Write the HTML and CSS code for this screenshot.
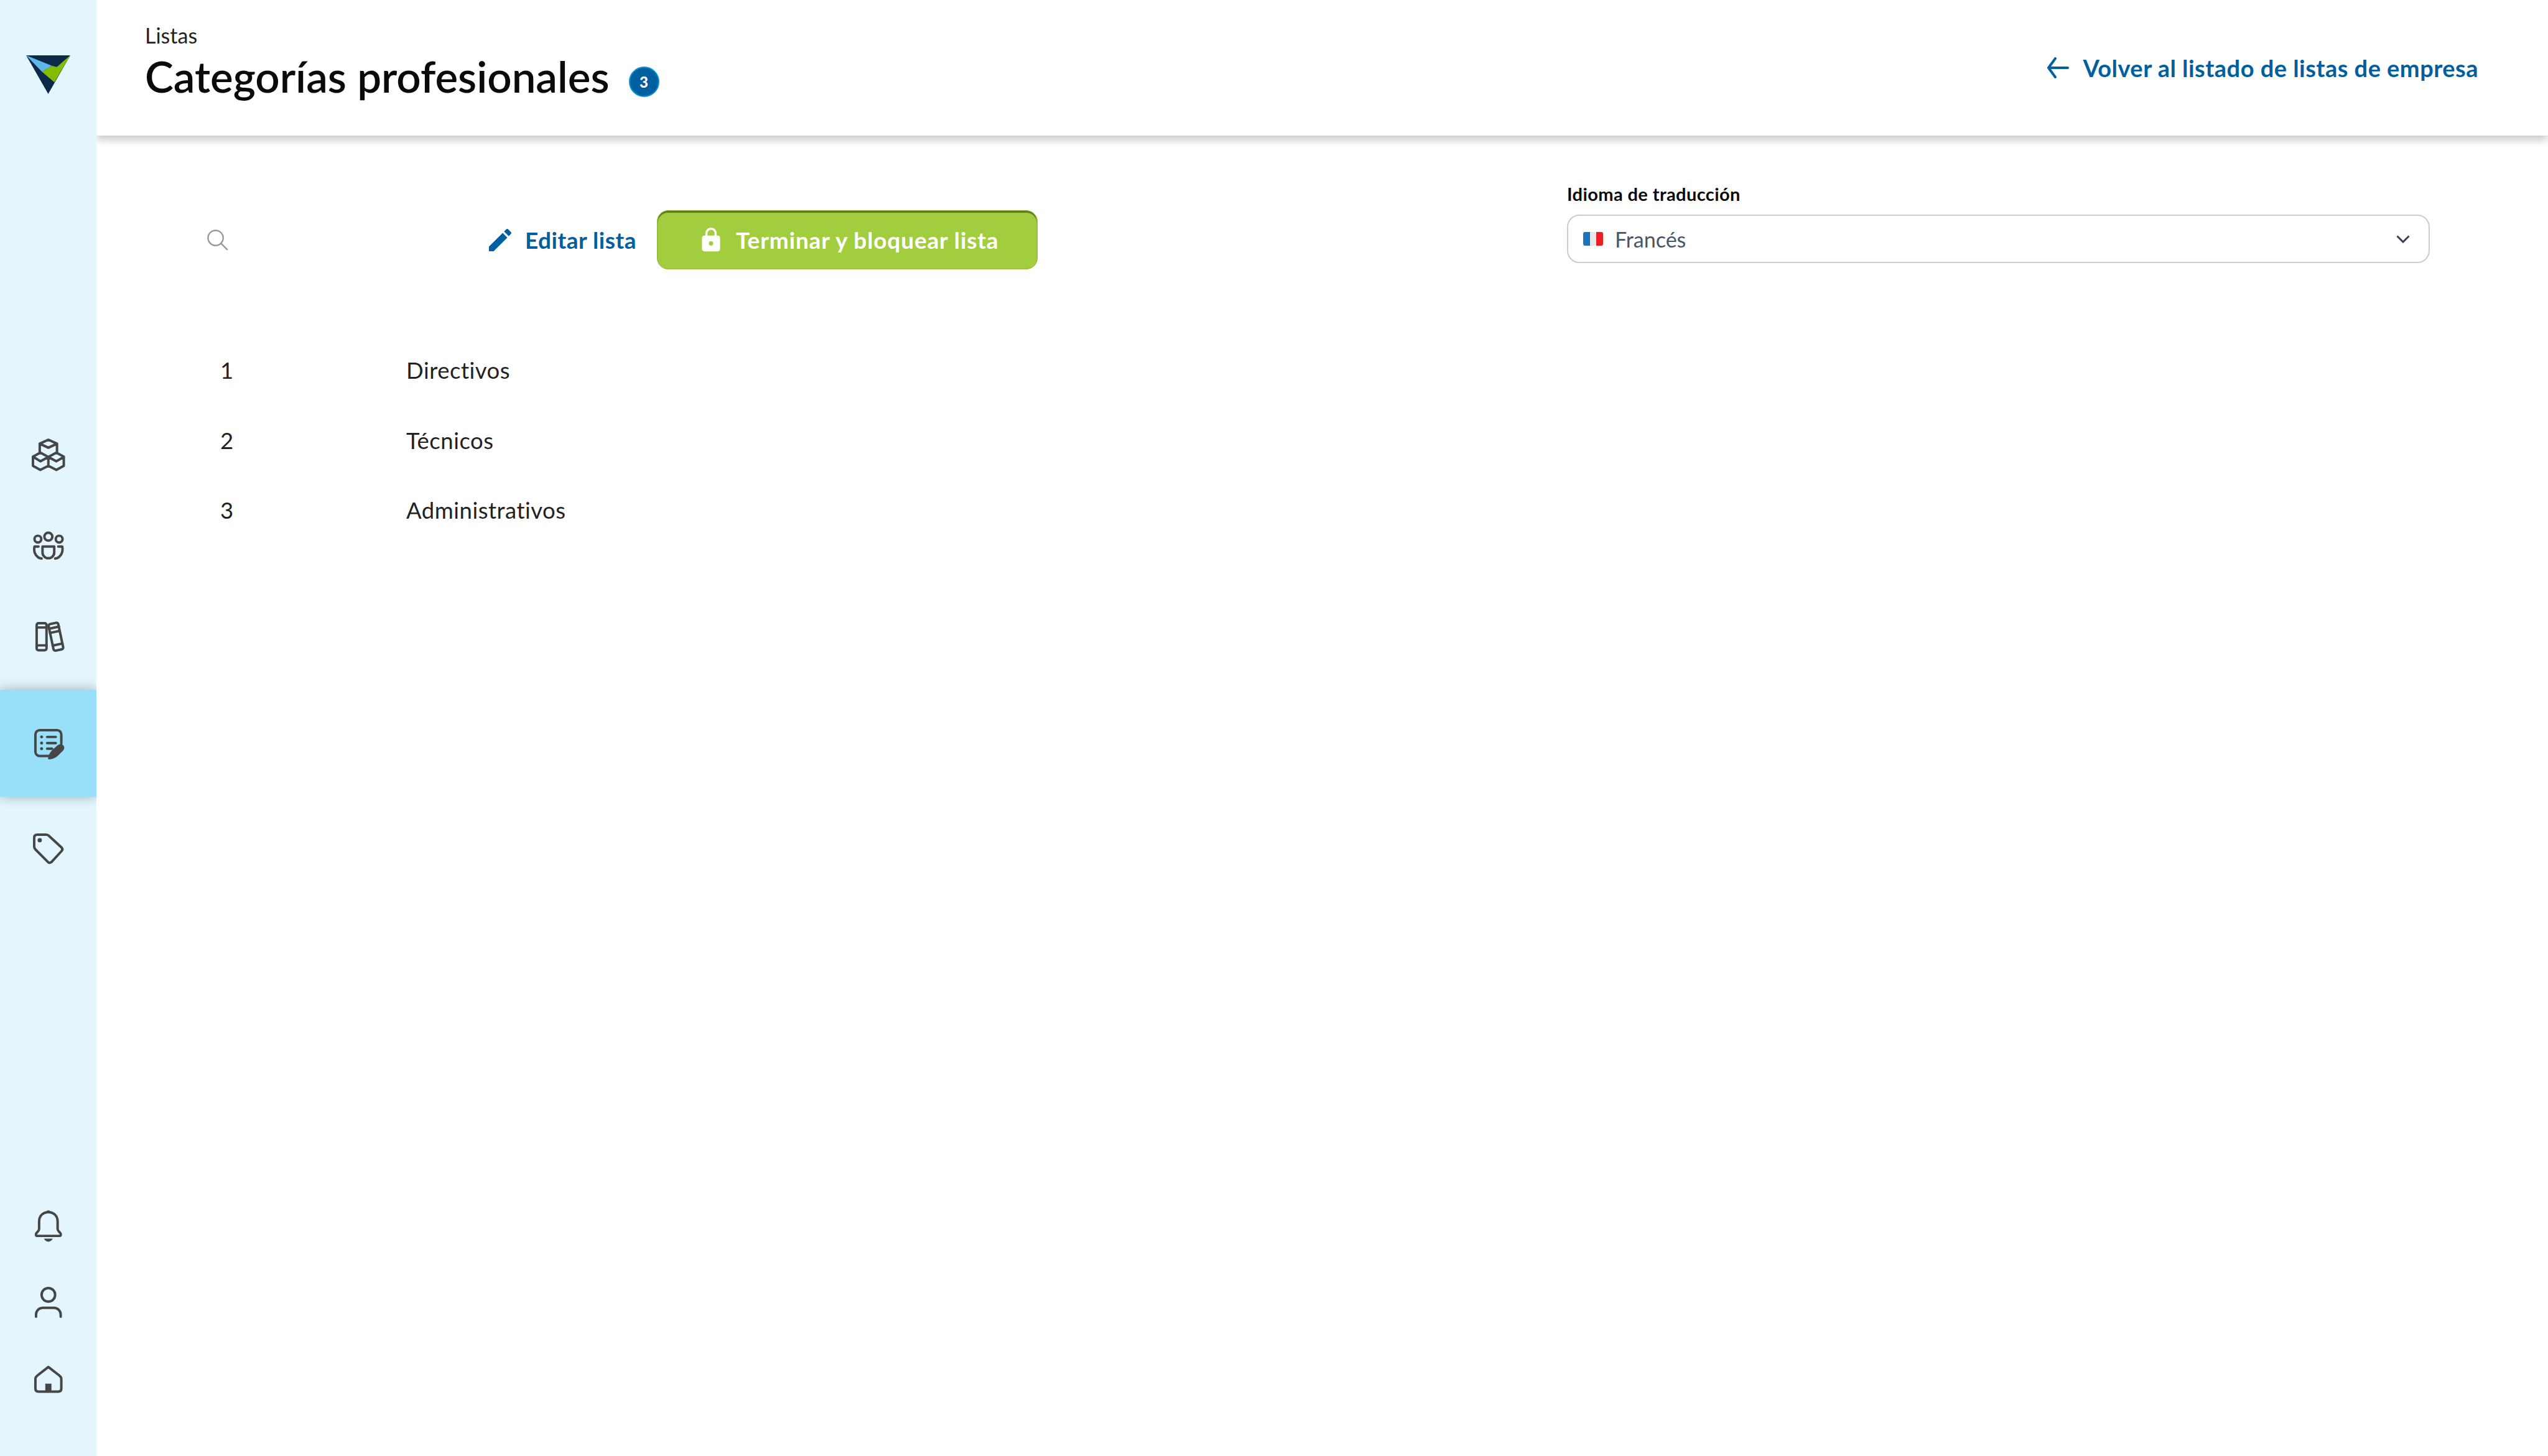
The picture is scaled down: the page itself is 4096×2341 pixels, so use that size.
FILE: index.html
```html
<!DOCTYPE html>
<html lang="es">
<head>
<meta charset="utf-8">
<title>Categorías profesionales</title>
<link rel="stylesheet" href="styles.css">
</head>
<body>
<div class="app">
  <aside class="sidebar">
    <svg class="logo" viewBox="40 88 76 67">
      <polygon points="42,90 114,90 78,153" fill="#0b2a4a"/>
      <polygon points="42,90 84,107 68,117" fill="#5cb8e8"/>
      <polygon points="114,90 88,134 68,117 84,107 92,109" fill="#84bd00"/>
    </svg>
    <nav class="nav">
      <a class="nav-item"><svg class="ico" viewBox="50 710 56 56"><path d="M78 714l14 6.500-14 6.500-14-6.500zM64 720.500V736M92 720.500V736M53 741.500l12-6.500 13 7-13 7zM53 741.500v15l12 6.500 13-6.500 13 6.500 12-6.500v-15l-12-6.500-13 7 13 7 12-7M78 742v14.500"/></svg></a>
      <a class="nav-item"><svg class="ico" viewBox="50 858 56 56"><circle cx="78" cy="872" r="6.500"/><circle cx="61" cy="876" r="5.500"/><circle cx="95.500" cy="876" r="5.500"/><path d="M68.500 888H87.500V897.500a9.500 9.500 0 0 1-19 0zM62 888H55.500C53.500 897 58 906 67 907.500M94 888H100.500C102.500 897 98 906 89 907.500"/></svg></a>
      <a class="nav-item"><svg class="ico" viewBox="50 1005 56 56"><rect x="59" y="1012" width="16" height="44" rx="3"/><path d="M59 1019H75M59 1048H75"/><g transform="rotate(-12 90 1033)"><rect x="82" y="1012" width="16" height="44" rx="3"/><path d="M82 1019H98M82 1026H98M82 1047H98"/></g></svg></a>
      <a class="nav-item nav-item-active"><svg class="ico" viewBox="50 1180 56 56"><path d="M82 1227H64a7 7 0 0 1-7-7V1192a7 7 0 0 1 7-7H92a7 7 0 0 1 7 7V1207M76 1196H90M76 1206H90M76 1215H84"/><circle class="ico-fill" cx="67" cy="1196" r="2.500"/><circle class="ico-fill" cx="67" cy="1206" r="2.500"/><circle class="ico-fill" cx="67" cy="1215" r="2.500"/><path class="ico-fill" d="M79 1232.500c-1.500-.2-1.800-1.500-1.500-2.500 1-5 3-9 7-13l8-7c3-2.500 6-3 9-1 3 2.500 3 6 .5 9l-9 9c-4 3.500-9 5.500-14 5.500z"/></svg></a>
      <a class="nav-item nav-item-tag"><svg class="ico" viewBox="50 1350 56 56"><path d="M60 1355H74.500q2.500 0 4.500 2L99.500 1376q2.500 3 0 5.500L83 1399.500q-3 2.500-5.500 0L57 1379q-2-2-2-4.500V1360q0-5 5-5z"/><circle class="ico-fill" cx="64" cy="1364" r="3.500"/></svg></a>
    </nav>
    <nav class="nav nav-bottom">
      <a class="nav-item nav-item-small"><svg class="ico" viewBox="50 1960 56 56"><path d="M78 1965c-9 0-15 6-15 15v12c0 3-1.500 4-4 6.500-2 2-1.500 5 1 5H96c2.500 0 3-3 1-5-2.500-2.500-4-3.500-4-6.500v-12c0-9-6-15-15-15z"/><path class="ico-fill" d="M71 2008H85c-1 3-4 5-7 5s-6-2-7-5zM75 1965a3 3 0 0 1 6 0z"/></svg></a>
      <a class="nav-item nav-item-small"><svg class="ico" viewBox="50 2084 56 56"><circle cx="78" cy="2099" r="11"/><path d="M58 2134.500V2131a11 11 0 0 1 11-11H87a11 11 0 0 1 11 11v3.500"/></svg></a>
      <a class="nav-item nav-item-small"><svg class="ico" viewBox="50 2208 56 56"><path d="M78 2216L60 2230q-3 2-3 5.500V2251q0 5 5 5H94q5 0 5-5V2235.500q0-3.500-3-5.500z"/><rect class="ico-fill" x="73" y="2243" width="10" height="13"/></svg></a>
    </nav>
  </aside>
  <div class="main">
    <header class="header">
      <div class="heading">
        <div class="crumb">Listas</div>
        <div class="title-row">
          <h1 class="title">Categorías profesionales</h1>
          <span class="badge">3</span>
        </div>
      </div>
      <a class="back-link">
        <svg class="back-arrow" viewBox="0 0 36 34"><path d="M34 17H3M14 2L3 17l11 15"/></svg>
        <span>Volver al listado de listas de empresa</span>
      </a>
    </header>
    <section class="content">
      <div class="toolbar">
        <div class="actions">
          <div class="search">
            <svg class="search-ico" viewBox="0 0 36 36"><circle cx="15" cy="15" r="12.500"/><path d="M24 24l10 10"/></svg>
          </div>
          <a class="edit-link">
            <svg class="edit-ico" viewBox="3 3 18 18"><path d="M3 17.250V21h3.750L17.810 9.940l-3.750-3.750L3 17.250zM20.710 7.040c.39-.39.39-1.020 0-1.410l-2.340-2.340c-.39-.39-1.020-.39-1.410 0l-1.830 1.830 3.750 3.750 1.830-1.830z"/></svg>
            <span>Editar lista</span>
          </a>
          <button class="finish-btn">
            <svg class="lock-ico" viewBox="4 1 16 22"><path d="M18 8h-1V6c0-2.760-2.240-5-5-5S7 3.240 7 6v2H6c-1.100 0-2 .9-2 2v10c0 1.100.9 2 2 2h12c1.100 0 2-.9 2-2V10c0-1.100-.9-2-2-2zm-6 9c-1.100 0-2-.9-2-2s.9-2 2-2 2 .9 2 2-.9 2-2 2zm3.100-9H8.900V6c0-1.710 1.390-3.100 3.100-3.100 1.710 0 3.100 1.390 3.100 3.100v2z"/></svg>
            <span>Terminar y bloquear lista</span>
          </button>
        </div>
        <div class="lang">
          <div class="lang-label">Idioma de traducción</div>
          <div class="select">
            <span class="flag"><i class="flag-b"></i><i class="flag-w"></i><i class="flag-r"></i></span>
            <span class="select-text">Francés</span>
            <svg class="chevron" viewBox="0 0 22 13"><path d="M1.500 1.500L11 11l9.500-9.500"/></svg>
          </div>
        </div>
      </div>
      <div class="rows">
        <div class="row"><span>1</span><span>Directivos</span></div>
        <div class="row"><span>2</span><span>Técnicos</span></div>
        <div class="row"><span>3</span><span>Administrativos</span></div>
      </div>
    </section>
  </div>
</div>
</body>
</html>
```
FILE: styles.css
```css
* { box-sizing: border-box; }
html, body { margin: 0; height: 100%; background: #fff; }
body { font-family: "Lato", "Liberation Sans", sans-serif; color: #222; overflow: hidden; }
.app { display: flex; width: 4096px; height: 2341px; }

.sidebar {
  position: relative;
  z-index: 2;
  width: 155px;
  flex: none;
  background: #e3f6fd;
  display: flex;
  flex-direction: column;
  overflow: hidden;
  padding-top: 87px;
}
.logo { width: 75px; height: 66px; display: block; margin: 0 auto; flex: none; }
.nav { display: flex; flex-direction: column; margin-top: 505px; }
.nav-bottom { margin-top: auto; padding-bottom: 62px; }
.nav-item { height: 146px; display: flex; align-items: center; justify-content: center; }
.nav-item-active {
  height: 172px;
  margin-top: 13px;
  padding-top: 4px;
  background: #98e0f8;
  box-shadow: 0 0 18px rgba(0, 0, 0, .3);
}
.nav-item-tag { margin-top: 11px; }
.nav-item-small { height: 123px; }
.ico { width: 55.5px; height: 55.5px; fill: none; stroke: #464646; stroke-width: 4; stroke-linecap: round; stroke-linejoin: round; }
.ico-fill { fill: #464646; stroke: none; }

.main { flex: 1; min-width: 0; display: flex; flex-direction: column; }
.header {
  height: 218px;
  flex: none;
  background: #fff;
  box-shadow: 0 6px 14px rgba(0, 0, 0, .24);
  display: flex;
  align-items: flex-start;
  justify-content: space-between;
  padding: 36px 112px 0 78px;
}
.crumb { font-size: 34px; line-height: 42px; color: #222; }
.title-row { display: flex; align-items: center; margin-top: 6px; }
.title { margin: 0; font-size: 69px; line-height: 78px; font-weight: 600; color: #0a0a0a; }
.badge {
  width: 49px;
  height: 49px;
  margin: 17px 0 0 31px;
  border-radius: 50%;
  background: #005f9e;
  border: 2px solid #0a93d6;
  color: #fff;
  font-size: 24px;
  font-weight: 900;
  display: flex;
  align-items: center;
  justify-content: center;
}
.back-link { display: flex; align-items: center; gap: 22px; margin-top: 53px; color: #005f9e; font-size: 38px; line-height: 40px; font-weight: 700; letter-spacing: .47px; }
.back-arrow { width: 36px; height: 34px; fill: none; stroke: #005f9e; stroke-width: 4; stroke-linecap: round; stroke-linejoin: round; }

.content { padding: 76px 190px 0 177px; }
.toolbar { display: flex; justify-content: space-between; align-items: flex-start; }
.actions { display: flex; align-items: center; margin-top: 44px; }
.search { width: 454px; display: flex; align-items: center; }
.search-ico { width: 35px; height: 35px; fill: none; stroke: #999; stroke-width: 2.500; stroke-linecap: round; }
.edit-link { display: flex; align-items: center; gap: 22px; color: #005f9e; font-size: 37px; font-weight: 700; line-height: 40px; letter-spacing: .5px; }
.edit-ico { width: 36px; height: 36px; fill: #005f9e; display: block; }
.finish-btn {
  margin-left: 33px;
  width: 612px;
  height: 95px;
  border: 1px solid #8fb635;
  border-radius: 18px;
  background: #a2cd3e;
  box-shadow: inset 0 3px 1px #5c7a20;
  color: #fff;
  font: 700 37px/40px "Lato", "Liberation Sans", sans-serif;
  letter-spacing: .85px;
  display: flex;
  align-items: center;
  padding: 0 0 0 70px;
  gap: 24px;
}
.lock-ico { width: 32px; height: 40px; fill: #fff; display: block; }
.lang { width: 1387px; }
.lang-label { font-size: 29px; line-height: 36px; font-weight: 700; color: #0a0a0a; letter-spacing: .4px; }
.select {
  margin-top: 15px;
  height: 78px;
  border: 2.500px solid #ccc;
  border-radius: 20px;
  display: flex;
  align-items: center;
  padding: 0 30px 0 24px;
}
.flag { width: 32px; height: 22px; border-radius: 3px; overflow: hidden; display: flex; flex: none; }
.flag i { flex: 1; display: block; }
.flag-b { background: #1b75bb; }
.flag-w { background: #e6e7e8; }
.flag-r { background: #ed1c24; }
.select-text { margin-left: 19px; font-size: 34px; color: #4b5563; flex: 1; }
.chevron { width: 22px; height: 13px; fill: none; stroke: #374151; stroke-width: 3; }

.rows { margin-top: 106px; }
.row { height: 112.500px; display: grid; grid-template-columns: 299px 1fr; align-items: center; padding-left: 22px; font-size: 36.500px; letter-spacing: .5px; color: #222; }
```
